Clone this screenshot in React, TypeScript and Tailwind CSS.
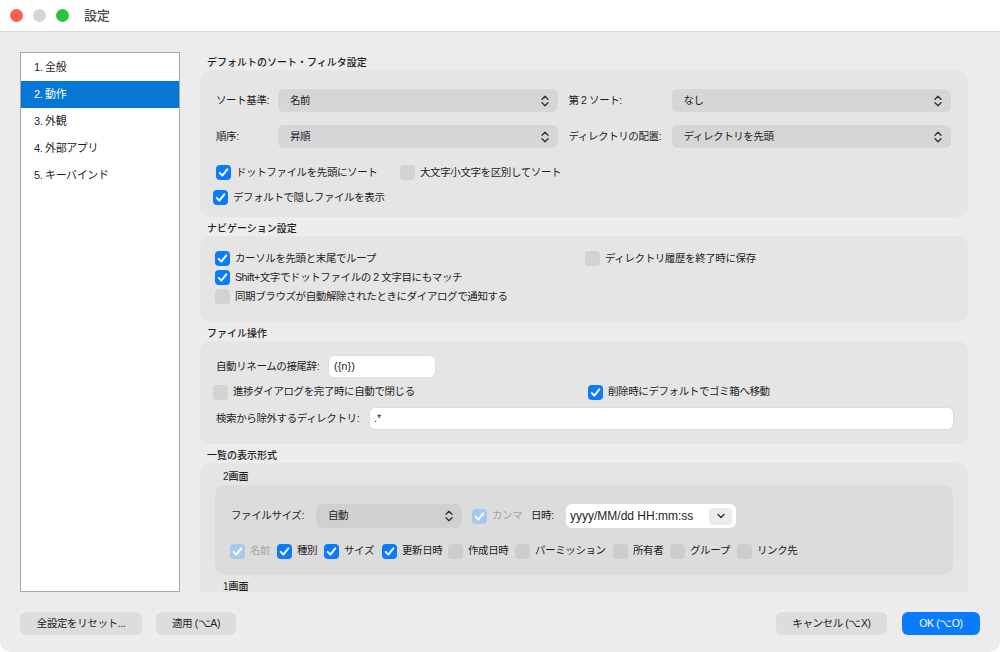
import { ReactNode } from "react";

type CbState = "on" | "off" | "dis";

const CheckBox = ({ state, dark }: { state: CbState; dark?: boolean }) => {
  const bg =
    state === "on"
      ? "bg-[#0a7aff]"
      : state === "dis"
      ? "bg-[#a8c9ef]"
      : dark
      ? "bg-[#cdcdcd]"
      : "bg-[#d3d3d3]";
  return (
    <div className={`w-[15px] h-[15px] rounded-[4px] shrink-0 flex items-center justify-center ${bg}`}>
      {state !== "off" && (
        <svg width="15" height="15" viewBox="0 0 15 15">
          <path
            d="M3.7 7.9 L6.3 10.6 L11.3 4.4"
            fill="none"
            stroke="white"
            strokeWidth="2"
            strokeLinecap="round"
            strokeLinejoin="round"
          />
        </svg>
      )}
    </div>
  );
};

const Item = ({
  state,
  children,
  className = "",
  dark,
}: {
  state: CbState;
  children: ReactNode;
  className?: string;
  dark?: boolean;
}) => (
  <div className={`flex items-center gap-[5px] ${className}`}>
    <CheckBox state={state} dark={dark} />
    <span className={state === "dis" ? "text-[#a6a6a6]" : "text-[#1e1e1e]"}>{children}</span>
  </div>
);

const UpDown = () => (
  <svg width="8" height="12" viewBox="0 0 8 12">
    <path
      d="M1 4.2 L4 1.2 L7 4.2 M1 7.8 L4 10.8 L7 7.8"
      fill="none"
      stroke="#333"
      strokeWidth="1.4"
      strokeLinecap="round"
      strokeLinejoin="round"
    />
  </svg>
);

const Select = ({
  children,
  className = "",
}: {
  children: ReactNode;
  className?: string;
}) => (
  <div
    className={`h-[23px] rounded-[6px] flex items-center justify-between pl-[12px] pr-[9px] text-[#1e1e1e] ${className}`}
  >
    <span>{children}</span>
    <UpDown />
  </div>
);

const Heading = ({ children }: { children: ReactNode }) => (
  <div className="pt-[5px] pl-[7px] h-[19px] leading-[14px] text-[10px] font-medium tracking-normal text-[#1e1e1e]">
    {children}
  </div>
);

const menu = ["1. 全般", "2. 動作", "3. 外観", "4. 外部アプリ", "5. キーバインド"];

const columns: { label: string; state: CbState; w: string }[] = [
  { label: "名前", state: "dis", w: "w-[47px]" },
  { label: "種別", state: "on", w: "w-[47px]" },
  { label: "サイズ", state: "on", w: "w-[58px]" },
  { label: "更新日時", state: "on", w: "w-[66px]" },
  { label: "作成日時", state: "off", w: "w-[67px]" },
  { label: "パーミッション", state: "off", w: "w-[98px]" },
  { label: "所有者", state: "off", w: "w-[57px]" },
  { label: "グループ", state: "off", w: "w-[67px]" },
  { label: "リンク先", state: "off", w: "" },
];

const App = () => {
  return (
    <div className="w-[1000px] h-[652px] bg-white font-['Liberation_Sans','Noto_Sans_CJK_JP',sans-serif] text-[10.5px] tracking-[-0.4px] text-[#1e1e1e]">
      <div className="w-full h-full rounded-b-[10px] overflow-hidden bg-[#ececec] flex flex-col">
        {/* Title bar */}
        <div className="h-[32px] shrink-0 bg-white border-b border-[#dadada] flex items-center pl-[10px]">
          <div className="w-[13px] h-[13px] rounded-full bg-[#ff5f57]" />
          <div className="w-[13px] h-[13px] rounded-full bg-[#d6d6d6] ml-[10px]" />
          <div className="w-[13px] h-[13px] rounded-full bg-[#29c440] ml-[10px]" />
          <span className="ml-[15px] text-[13px] font-medium tracking-normal text-[#4b4b4b]">設定</span>
        </div>

        {/* Main */}
        <div className="flex px-[20px] pt-[20px] gap-[20px]">
          <div className="w-[160px] h-[540px] shrink-0 bg-white border border-[#a6a6a6] pt-[1px]">
            {menu.map((m, i) => (
              <div
                key={m}
                className={`h-[27px] flex items-center pl-[13px] text-[11px] ${
                  i === 1 ? "bg-[#0677d5] text-white" : "text-[#1e1e1e]"
                }`}
              >
                {m}
              </div>
            ))}
          </div>

          <div className="w-[768px] h-[540px] overflow-hidden">
            {/* Sort */}
            <div className="pt-[4px] pl-[7px] h-[18px] leading-[14px] text-[10px] font-medium tracking-normal">
              デフォルトのソート・フィルタ設定
            </div>
            <div className="bg-[#e5e5e5] rounded-[10px] pt-[19px] pb-[12px] pl-[16px] pr-[17px]">
              <div className="flex items-center h-[23px]">
                <span className="w-[62px]">ソート基準:</span>
                <Select className="flex-1 bg-[#d6d6d6]">名前</Select>
                <span className="w-[103px] ml-[11px]">第 2 ソート:</span>
                <Select className="flex-1 bg-[#d6d6d6]">なし</Select>
              </div>
              <div className="flex items-center h-[23px] mt-[13px]">
                <span className="w-[62px]">順序:</span>
                <Select className="flex-1 bg-[#d6d6d6]">昇順</Select>
                <span className="w-[103px] ml-[11px]">ディレクトリの配置:</span>
                <Select className="flex-1 bg-[#d6d6d6]">ディレクトリを先頭</Select>
              </div>
              <div className="flex items-center h-[15px] mt-[17px]">
                <Item state="on" className="w-[184px]">ドットファイルを先頭にソート</Item>
                <Item state="off">大文字小文字を区別してソート</Item>
              </div>
              <div className="flex items-center h-[15px] mt-[10px] -ml-[3px]">
                <Item state="on">デフォルトで隠しファイルを表示</Item>
              </div>
            </div>

            {/* Navigation */}
            <Heading>ナビゲーション設定</Heading>
            <div className="bg-[#e5e5e5] rounded-[10px] pt-[13px] pb-[16px] pl-[15px] pr-[17px]">
              <div className="flex items-center h-[19px]">
                <Item state="on" className="w-[370px]">カーソルを先頭と末尾でループ</Item>
                <Item state="off">ディレクトリ履歴を終了時に保存</Item>
              </div>
              <div className="flex items-center h-[19px]">
                <Item state="on">Shift+文字でドットファイルの 2 文字目にもマッチ</Item>
              </div>
              <div className="flex items-center h-[19px]">
                <Item state="off">同期ブラウズが自動解除されたときにダイアログで通知する</Item>
              </div>
            </div>

            {/* File ops */}
            <Heading>ファイル操作</Heading>
            <div className="bg-[#e5e5e5] rounded-[10px] pt-[15px] pb-[15px] pl-[16px] pr-[15px]">
              <div className="flex items-center h-[21px]">
                <span className="w-[113px]">自動リネームの接尾辞:</span>
                <div className="w-[106px] h-[21px] bg-white rounded-[5px] flex items-center pl-[5px] text-[11px] tracking-normal shadow-[0_0_0_0.5px_#d4d4d4]">
                  ({"{n}"})
                </div>
              </div>
              <div className="flex items-center h-[16px] mt-[7px] -ml-[3px]">
                <Item state="off" className="w-[375px]">進捗ダイアログを完了時に自動で閉じる</Item>
                <Item state="on">削除時にデフォルトでゴミ箱へ移動</Item>
              </div>
              <div className="flex items-center h-[21px] mt-[8px]">
                <span className="w-[154px]">検索から除外するディレクトリ:</span>
                <div className="flex-1 h-[21px] bg-white rounded-[5px] flex items-center pl-[4px] text-[11px] tracking-normal shadow-[0_0_0_0.5px_#d4d4d4]">
                  .*
                </div>
              </div>
            </div>

            {/* List display */}
            <Heading>一覧の表示形式</Heading>
            <div className="bg-[#e5e5e5] rounded-[10px] pt-[7px] pb-[20px]">
              <div className="pl-[23px] h-[14px] leading-[14px] text-[10px] font-medium tracking-normal">2画面</div>
              <div className="mx-[15px] mt-[1px] bg-[#dcdcdc] rounded-[10px] pt-[19px] pb-[16px] pl-[15px]">
                <div className="flex items-center h-[24px]">
                  <span className="w-[86px] pl-[1px]">ファイルサイズ:</span>
                  <Select className="w-[146px] h-[24px] bg-[#d0d0d0]">自動</Select>
                  <div className="ml-[10px] flex items-center">
                    <CheckBox state="dis" />
                    <span className="w-[44px] pl-[5px] text-[#a6a6a6]">カンマ</span>
                  </div>
                  <span className="w-[35px]">日時:</span>
                  <div className="w-[170px] h-[24px] bg-white rounded-[6px] flex items-center justify-between pl-[4px] pr-[4px] text-[12px] tracking-normal">
                    <span>yyyy/MM/dd HH:mm:ss</span>
                    <div className="w-[23px] h-[17px] rounded-[4px] bg-[#ebebeb] flex items-center justify-center">
                      <svg width="8" height="6" viewBox="0 0 8 6">
                        <path
                          d="M1 1.5 L4 4.5 L7 1.5"
                          fill="none"
                          stroke="#333"
                          strokeWidth="1.4"
                          strokeLinecap="round"
                          strokeLinejoin="round"
                        />
                      </svg>
                    </div>
                  </div>
                </div>
                <div className="flex items-center h-[16px] mt-[15px]">
                  {columns.map((c) => (
                    <Item key={c.label} state={c.state} className={c.w} dark>
                      {c.label}
                    </Item>
                  ))}
                </div>
              </div>
              <div className="pl-[23px] mt-[5px] h-[14px] leading-[14px] text-[10px] font-medium tracking-normal">1画面</div>
            </div>
          </div>
        </div>

        {/* Bottom buttons */}
        <div className="flex justify-between px-[20px] pt-[20px]">
          <div className="flex">
            <button className="w-[122px] h-[23px] rounded-[6px] bg-[#dddddd] text-[10.5px] text-[#1e1e1e]">
              全設定をリセット...
            </button>
            <button className="w-[80px] h-[23px] ml-[14px] rounded-[6px] bg-[#dddddd] text-[10.5px] text-[#1e1e1e]">
              適用 (⌥A)
            </button>
          </div>
          <div className="flex">
            <button className="w-[111px] h-[23px] rounded-[6px] bg-[#dddddd] text-[10.5px] text-[#1e1e1e]">
              キャンセル (⌥X)
            </button>
            <button className="w-[78px] h-[23px] ml-[15px] rounded-[6px] bg-[#0b7bfd] text-[10.5px] text-white">
              OK (⌥O)
            </button>
          </div>
        </div>
      </div>
    </div>
  );
};

export default App;
